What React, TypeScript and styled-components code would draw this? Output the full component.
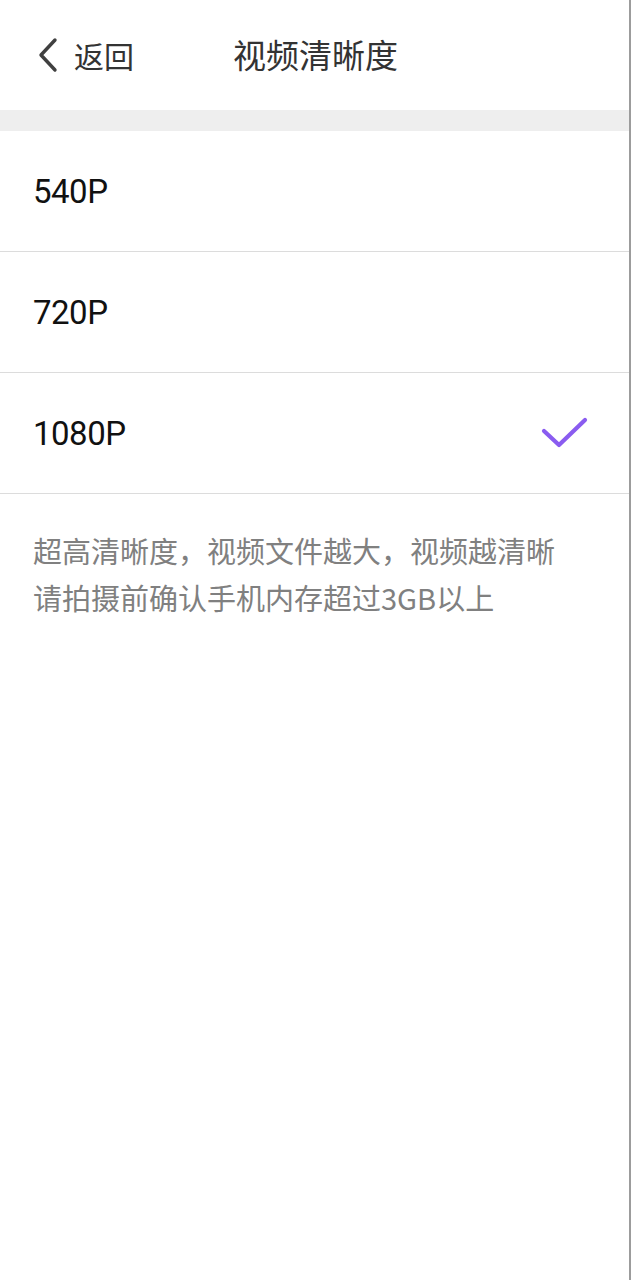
import styled, { createGlobalStyle } from 'styled-components'

const GlobalStyle = createGlobalStyle`
  html, body {
    margin: 0;
    padding: 0;
    background: #ffffff;
  }
  body {
    font-family: Roboto, "Noto Sans CJK SC", sans-serif;
  }
`

const options = ['540P', '720P', '1080P']
const selected = '1080P'

export default function App() {
  return (
    <>
      <GlobalStyle />
      <Page>
        <Header>
          <BackButton>
            <svg width="22" height="36" viewBox="0 0 22 36">
              <path
                d="M18 3 L4 18 L18 33"
                fill="none"
                stroke="#404040"
                strokeWidth="3.4"
                strokeLinecap="round"
                strokeLinejoin="round"
              />
            </svg>
            <BackText>返回</BackText>
          </BackButton>
          <Title>视频清晰度</Title>
          <div />
        </Header>
        <Divider />
        <List>
          {options.map((item) => (
            <Row key={item}>
              <RowLabel>{item}</RowLabel>
              {item === selected && (
                <svg width="48" height="36" viewBox="0 0 48 36">
                  <path
                    d="M4 16 L19 30 L45 5"
                    fill="none"
                    stroke="#8a5cf0"
                    strokeWidth="4.2"
                    strokeLinecap="round"
                    strokeLinejoin="round"
                  />
                </svg>
              )}
            </Row>
          ))}
        </List>
        <Description>
          <p>超高清晰度，视频文件越大，视频越清晰</p>
          <p>请拍摄前确认手机内存超过3GB以上</p>
        </Description>
      </Page>
    </>
  )
}

const Page = styled.div`
  width: 631px;
  min-height: 1280px;
  box-sizing: border-box;
  border-right: 2px solid #9c9c9c;
  background: #ffffff;
`

const Header = styled.div`
  height: 110px;
  display: grid;
  grid-template-columns: 1fr auto 1fr;
  align-items: center;
  padding-left: 37px;
  padding-right: 35px;
`

const BackButton = styled.div`
  display: flex;
  align-items: center;
  gap: 15px;
  cursor: pointer;
`

const BackText = styled.span`
  font-family: "Noto Sans CJK SC", sans-serif;
  font-size: 30px;
  color: #333333;
`

const Title = styled.div`
  font-family: "Noto Sans CJK SC", sans-serif;
  font-size: 33px;
  color: #333333;
  margin-top: -2px;
`

const Divider = styled.div`
  height: 21px;
  background: #eeeeee;
`

const List = styled.div`
  display: flex;
  flex-direction: column;
`

const Row = styled.div`
  height: 120px;
  display: flex;
  align-items: center;
  justify-content: space-between;
  padding: 0 41px 0 33px;
  border-bottom: 1px solid #dcdcdc;
`

const RowLabel = styled.span`
  font-family: Roboto, sans-serif;
  font-size: 33px;
  letter-spacing: -0.5px;
  color: #111111;
`

const Description = styled.div`
  padding: 33px 33px 0;
  font-family: "Noto Sans CJK SC", sans-serif;
  font-size: 29px;
  line-height: 47px;
  color: #808080;

  p {
    margin: 0;
  }
`
